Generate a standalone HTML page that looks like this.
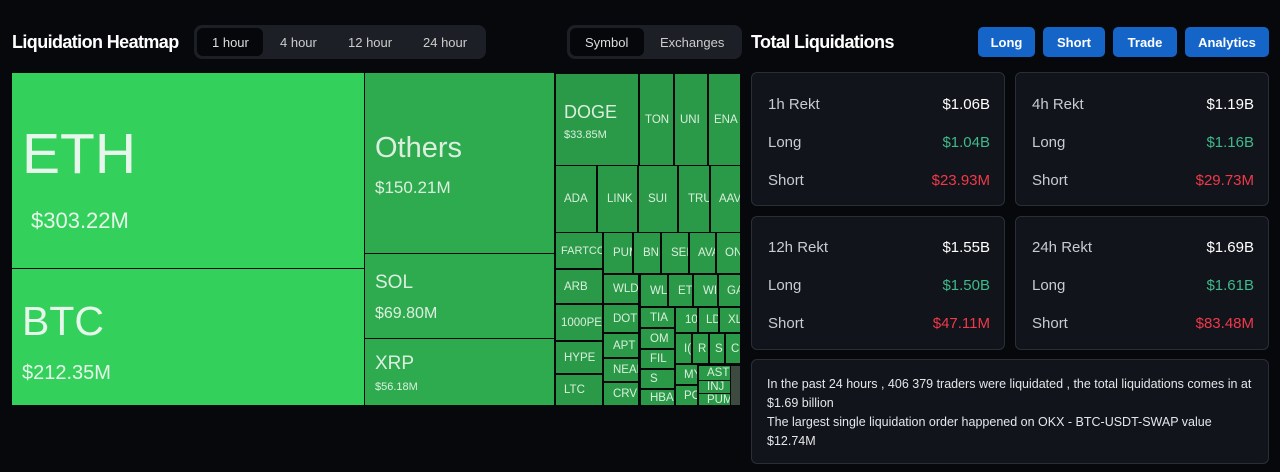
<!DOCTYPE html><html><head><style>
*{margin:0;padding:0;box-sizing:border-box}
body{width:1280px;height:472px;background:#06080c;font-family:"Liberation Sans",sans-serif;color:#fff;position:relative;overflow:hidden}
.a{position:absolute}
.t{background:#2b9a48;color:#d8efdc;font-size:11.5px;display:flex;align-items:center;justify-content:flex-start;padding-left:5px;overflow:hidden;white-space:nowrap}
.card{position:absolute;background:#11141a;border:1px solid #2a2e36;border-radius:6px}
.row{position:absolute;left:16px;right:14px;display:flex;justify-content:space-between;font-size:15px;color:#c8ccd2}
.btn{position:absolute;top:27px;height:30px;background:#1565c8;border-radius:5px;font-size:13px;font-weight:bold;display:flex;align-items:center;justify-content:center}
</style></head><body>
<div class="a" style="left:12px;top:32px;font-size:18px;font-weight:bold;letter-spacing:-0.6px">Liquidation Heatmap</div>
<div class="a" style="left:194px;top:25px;width:292px;height:34px;background:#1c1f25;border-radius:8px"></div>
<div class="a" style="left:197px;top:28px;width:66px;height:28px;background:#05070a;border-radius:6px"></div>
<div class="a" style="left:212px;top:35px;font-size:13px;color:#ddd">1 hour</div>
<div class="a" style="left:280px;top:35px;font-size:13px;color:#ccc">4 hour</div>
<div class="a" style="left:348px;top:35px;font-size:13px;color:#ccc">12 hour</div>
<div class="a" style="left:423px;top:35px;font-size:13px;color:#ccc">24 hour</div>
<div class="a" style="left:567px;top:25px;width:175px;height:34px;background:#1c1f25;border-radius:8px"></div>
<div class="a" style="left:570px;top:28px;width:74px;height:28px;background:#05070a;border-radius:6px"></div>
<div class="a" style="left:585px;top:35px;font-size:13px;color:#ddd">Symbol</div>
<div class="a" style="left:660px;top:35px;font-size:13px;color:#ccc">Exchanges</div>

<div class="a" style="left:12px;top:73px;width:352px;height:195px;background:#33d15b"></div>
<div class="a" style="left:22px;top:121px;font-size:57px;color:#e6f6ea">ETH</div>
<div class="a" style="left:31px;top:208px;font-size:22px;color:#e6f6ea">$303.22M</div>
<div class="a" style="left:12px;top:269px;width:352px;height:136px;background:#33d15b"></div>
<div class="a" style="left:22px;top:298px;font-size:41px;color:#e6f6ea">BTC</div>
<div class="a" style="left:22px;top:362px;font-size:20px;color:#e6f6ea">$212.35M</div>
<div class="a" style="left:365px;top:73px;width:189px;height:180px;background:#2eaa4f"></div>
<div class="a" style="left:375px;top:132px;font-size:29px;color:#dcefdf">Others</div>
<div class="a" style="left:375px;top:178px;font-size:17px;color:#dcefdf">$150.21M</div>
<div class="a" style="left:365px;top:254px;width:189px;height:84px;background:#2eaa4f"></div>
<div class="a" style="left:375px;top:272px;font-size:19px;color:#dcefdf">SOL</div>
<div class="a" style="left:375px;top:305px;font-size:16px;color:#dcefdf">$69.80M</div>
<div class="a" style="left:365px;top:339px;width:189px;height:66px;background:#2eaa4f"></div>
<div class="a" style="left:375px;top:353px;font-size:19px;color:#dcefdf">XRP</div>
<div class="a" style="left:375px;top:381px;font-size:11px;color:#dcefdf">$56.18M</div>

<div class="a t" style="left:556px;top:74px;width:82px;height:91px;display:block;padding:28px 0 0 8px"><div style="font-size:18px">DOGE</div><div style="font-size:11px;margin-top:6px">$33.85M</div></div>
<div class="a t" style="left:640px;top:74px;width:33px;height:91px">TON</div>
<div class="a t" style="left:675px;top:74px;width:32px;height:91px">UNI</div>
<div class="a t" style="left:709px;top:74px;width:31px;height:91px">ENA</div>
<div class="a t" style="left:556px;top:166px;width:40px;height:66px;padding-left:8px">ADA</div>
<div class="a t" style="left:598px;top:166px;width:39px;height:66px;padding-left:9px">LINK</div>
<div class="a t" style="left:639px;top:166px;width:38px;height:66px;padding-left:9px">SUI</div>
<div class="a t" style="left:679px;top:166px;width:30px;height:66px;padding-left:9px">TRU</div>
<div class="a t" style="left:711px;top:166px;width:29px;height:66px;padding-left:8px">AAV</div>
<div class="a t" style="left:556px;top:233px;width:46px;height:35px;font-size:11px">FARTCO</div>
<div class="a t" style="left:556px;top:270px;width:46px;height:33px;padding-left:8px">ARB</div>
<div class="a t" style="left:556px;top:305px;width:46px;height:35px">1000PE</div>
<div class="a t" style="left:556px;top:342px;width:46px;height:31px;padding-left:8px">HYPE</div>
<div class="a t" style="left:556px;top:375px;width:46px;height:30px;padding-left:8px">LTC</div>
<div class="a t" style="left:604px;top:233px;width:28px;height:40px;padding-left:9px">PUM</div>
<div class="a t" style="left:634px;top:233px;width:26px;height:40px;padding-left:9px">BNB</div>
<div class="a t" style="left:662px;top:233px;width:26px;height:40px;padding-left:9px">SEI</div>
<div class="a t" style="left:690px;top:233px;width:25px;height:40px;padding-left:8px">AVA</div>
<div class="a t" style="left:717px;top:233px;width:23px;height:40px;padding-left:8px">ON</div>
<div class="a t" style="left:604px;top:275px;width:34px;height:28px;padding-left:9px">WLD</div>
<div class="a t" style="left:641px;top:275px;width:26px;height:31px;padding-left:9px">WL</div>
<div class="a t" style="left:669px;top:275px;width:23px;height:31px;padding-left:9px">ETC</div>
<div class="a t" style="left:694px;top:275px;width:23px;height:31px;padding-left:9px">WI</div>
<div class="a t" style="left:719px;top:275px;width:21px;height:31px;padding-left:8px">GA</div>
<div class="a t" style="left:604px;top:305px;width:34px;height:27px;padding-left:9px">DOT</div>
<div class="a t" style="left:604px;top:334px;width:34px;height:23px;padding-left:9px">APT</div>
<div class="a t" style="left:604px;top:359px;width:34px;height:22px;padding-left:9px">NEAR</div>
<div class="a t" style="left:604px;top:383px;width:34px;height:22px;padding-left:9px">CRV</div>
<div class="a t" style="left:641px;top:308px;width:33px;height:19px;padding-left:9px">TIA</div>
<div class="a t" style="left:641px;top:329px;width:33px;height:19px;padding-left:9px">OM</div>
<div class="a t" style="left:641px;top:350px;width:33px;height:18px;padding-left:9px">FIL</div>
<div class="a t" style="left:641px;top:370px;width:33px;height:18px;padding-left:9px">S</div>
<div class="a t" style="left:641px;top:390px;width:33px;height:15px;padding-left:9px">HBAR</div>
<div class="a t" style="left:676px;top:308px;width:21px;height:24px;padding-left:9px">10</div>
<div class="a t" style="left:699px;top:308px;width:19px;height:24px;padding-left:7px">LD</div>
<div class="a t" style="left:720px;top:308px;width:20px;height:24px;padding-left:8px">XL</div>
<div class="a t" style="left:676px;top:334px;width:15px;height:29px;padding-left:8px">I(</div>
<div class="a t" style="left:693px;top:334px;width:15px;height:29px;padding-left:5px">R</div>
<div class="a t" style="left:710px;top:334px;width:14px;height:29px;padding-left:5px">S</div>
<div class="a t" style="left:726px;top:334px;width:14px;height:29px;padding-left:5px">C</div>
<div class="a t" style="left:676px;top:365px;width:21px;height:19px;padding-left:8px">MY</div>
<div class="a t" style="left:676px;top:386px;width:21px;height:19px;padding-left:8px">PO</div>
<div class="a t" style="left:699px;top:366px;width:31px;height:14px;padding-left:8px">ASTI</div>
<div class="a t" style="left:699px;top:381px;width:31px;height:12px;padding-left:8px">INJ</div>
<div class="a t" style="left:699px;top:394px;width:31px;height:11px;padding-left:8px">PUM</div>
<div class="a" style="left:731px;top:366px;width:9px;height:39px;background:#3c4a40"></div>

<div class="a" style="left:751px;top:32px;font-size:18px;font-weight:bold;letter-spacing:-0.6px">Total Liquidations</div>
<div class="btn" style="left:978px;width:57px">Long</div>
<div class="btn" style="left:1043px;width:62px">Short</div>
<div class="btn" style="left:1113px;width:64px">Trade</div>
<div class="btn" style="left:1185px;width:84px">Analytics</div>

<div class="card" style="left:751px;top:72px;width:254px;height:134px">
<div class="row" style="top:23px"><span>1h Rekt</span><span style="color:#fff">$1.06B</span></div>
<div class="row" style="top:61px"><span>Long</span><span style="color:#3fb98a">$1.04B</span></div>
<div class="row" style="top:99px"><span>Short</span><span style="color:#f0394a">$23.93M</span></div></div>
<div class="card" style="left:1015px;top:72px;width:254px;height:134px">
<div class="row" style="top:23px"><span>4h Rekt</span><span style="color:#fff">$1.19B</span></div>
<div class="row" style="top:61px"><span>Long</span><span style="color:#3fb98a">$1.16B</span></div>
<div class="row" style="top:99px"><span>Short</span><span style="color:#f0394a">$29.73M</span></div></div>
<div class="card" style="left:751px;top:216px;width:254px;height:134px">
<div class="row" style="top:22px"><span>12h Rekt</span><span style="color:#fff">$1.55B</span></div>
<div class="row" style="top:60px"><span>Long</span><span style="color:#3fb98a">$1.50B</span></div>
<div class="row" style="top:98px"><span>Short</span><span style="color:#f0394a">$47.11M</span></div></div>
<div class="card" style="left:1015px;top:216px;width:254px;height:134px">
<div class="row" style="top:22px"><span>24h Rekt</span><span style="color:#fff">$1.69B</span></div>
<div class="row" style="top:60px"><span>Long</span><span style="color:#3fb98a">$1.61B</span></div>
<div class="row" style="top:98px"><span>Short</span><span style="color:#f0394a">$83.48M</span></div></div>
<div class="card" style="left:751px;top:359px;width:518px;height:105px;padding:15px 14px 0 15px;font-size:12.5px;line-height:19px;color:#e4e6ea">In the past 24 hours , 406 379 traders were liquidated , the total liquidations comes in at $1.69 billion<br>The largest single liquidation order happened on OKX - BTC-USDT-SWAP value $12.74M</div>
</body></html>
